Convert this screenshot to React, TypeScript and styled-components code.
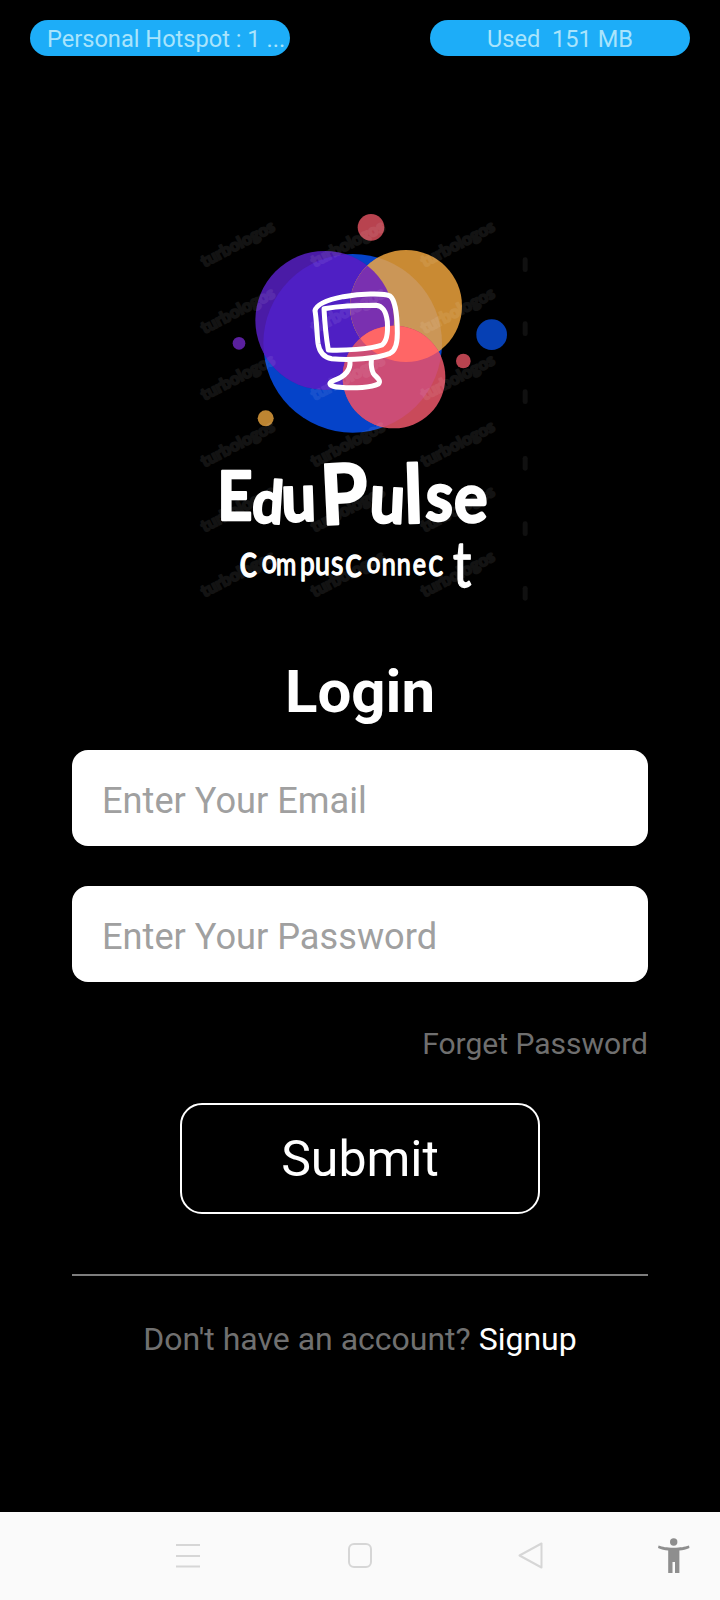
import React from "react";
import styled, { createGlobalStyle } from "styled-components";

const Global = createGlobalStyle`
  html, body { margin: 0; padding: 0; background: #000; }
  * { box-sizing: border-box; }
`;

const Screen = styled.div`
  width: 720px;
  height: 1600px;
  background: #000;
  display: flex;
  flex-direction: column;
  font-family: Roboto, "Liberation Sans", sans-serif;
  overflow: hidden;
`;

const TopBar = styled.div`
  display: flex;
  justify-content: space-between;
  padding: 20px 30px 0;
`;

const Pill = styled.div<{ $center?: boolean }>`
  width: 260px;
  height: 36px;
  border-radius: 18px;
  background: #1dadf8;
  color: #a9e4fc;
  font-size: 23.6px;
  line-height: 38px;
  white-space: nowrap;
  overflow: hidden;
  text-align: ${(p) => (p.$center ? "center" : "left")};
  padding-left: ${(p) => (p.$center ? "0" : "17px")};
`;

const LogoArt = styled.svg`
  display: block;
  width: 360px;
  height: 410px;
  margin: 144px auto 0;
  flex: none;
`;

const Mark = styled.text`
  font-family: Lato, "Open Sans", sans-serif;
  font-weight: 900;
  font-size: 50px;
  fill: #fff;
  stroke: #fff;
  stroke-width: 5px;
  stroke-linejoin: round;
  opacity: 0.075;
`;

const MarkEdge = styled.rect`
  fill: #101010;
`;

const Wordmark = styled.text`
  font-family: Lato, "Open Sans", sans-serif;
  font-weight: 700;
  fill: #fff;
  stroke: #fff;
  stroke-width: 7px;
  stroke-linejoin: round;
`;

const Tagline = styled.text`
  font-family: Lato, "Open Sans", sans-serif;
  font-weight: 400;
  fill: #fff;
  stroke: #fff;
  stroke-width: 4px;
  stroke-linejoin: round;
`;

const Form = styled.div`
  display: flex;
  flex-direction: column;
  padding: 0 72px;
`;

const Title = styled.h1`
  margin: 46px 0 23px;
  font-size: 60px;
  line-height: 71px;
  font-weight: 700;
  color: #fff;
  text-align: center;
`;

const Input = styled.input`
  display: block;
  width: 100%;
  height: 96px;
  border: 0;
  outline: 0;
  border-radius: 16px;
  background: #fff;
  padding: 4px 30px 0;
  font-family: inherit;
  font-size: 36.2px;
  color: #222;
  margin-bottom: 40px;
  &::placeholder { color: #a0a0a0; opacity: 1; }
`;

const Forgot = styled.div`
  margin-top: 4px;
  text-align: right;
  font-size: 30px;
  line-height: 36px;
  color: #6f6f6f;
`;

const SubmitButton = styled.button`
  display: block;
  width: 360px;
  height: 111px;
  margin: 41px auto 0;
  padding: 0;
  border: 2px solid #fff;
  border-radius: 22px;
  background: #000;
  color: #fff;
  font-family: inherit;
  font-size: 50px;
`;

const Divider = styled.div`
  height: 2px;
  background: #7d7d7d;
  margin-top: 60px;
`;

const Prompt = styled.div`
  margin-top: 45px;
  text-align: center;
  font-size: 32px;
  line-height: 36px;
  color: #707070;
`;

const SignupLink = styled.span`
  color: #fff;
`;

const NavBar = styled.div`
  margin-top: auto;
  height: 88px;
  background: #fafafa;
  display: flex;
  align-items: flex-start;
  padding: 25px 0 0 176px;
  flex: none;
`;

const NavIcon = styled.svg<{ $left: number; $top: number }>`
  display: block;
  flex: none;
  margin-left: ${(p) => p.$left}px;
  margin-top: ${(p) => p.$top}px;
`;

const marksX = [175, 505, 835];
const marksY = [135, 335, 535, 735, 930, 1125];
const edgeY = [172, 364, 568, 768, 964, 1158];

type L = [string, number, number, number, number];

const word: L[] = [
  ["E", 112, 960, 200, 0],
  ["d", 214, 965, 178, 4],
  ["u", 306, 965, 200, -2],
  ["P", 425, 975, 250, -3],
  ["u", 566, 965, 205, 3],
  ["l", 675, 970, 243, -2],
  ["s", 735, 960, 205, 2],
  ["e", 822, 965, 205, 0],
];

const tag: L[] = [
  ["c", 178, 1132, 138, 0],
  ["o", 245, 1120, 98, 0],
  ["m", 288, 1125, 90, 0],
  ["p", 360, 1125, 96, 0],
  ["u", 405, 1125, 98, 0],
  ["s", 453, 1125, 105, 0],
  ["c", 495, 1130, 130, 0],
  ["o", 560, 1120, 88, 0],
  ["n", 605, 1125, 92, 0],
  ["n", 650, 1125, 92, 0],
  ["e", 698, 1125, 92, 0],
  ["c", 745, 1128, 115, 0],
  ["t", 818, 1160, 190, 0],
];

function Letters({ items, sx }: { items: L[]; sx: number }) {
  return (
    <>
      {items.map(([c, x, y, s, r], i) => (
        <tspan key={i} x={x / sx} y={y} fontSize={s} rotate={r}>
          {c}
        </tspan>
      ))}
    </>
  );
}

function Logo() {
  const blue = <circle cx="518" cy="430" r="268" />;
  const purple = <circle cx="434" cy="361" r="208" />;
  const orange = <circle cx="678" cy="318" r="168" />;
  const red = <circle cx="642" cy="531" r="154" />;
  return (
    <LogoArt viewBox="0 0 1080 1230">
      <defs>
        <clipPath id="cb">{blue}</clipPath>
        <clipPath id="cp">{purple}</clipPath>
        <clipPath id="co">{orange}</clipPath>
        <clipPath id="cr">{red}</clipPath>
      </defs>
      <g fill="#0543c9">{blue}</g>
      <g fill="#4a1ba6">{purple}</g>
      <g fill="#4f1fc4" clipPath="url(#cb)">{purple}</g>
      <g fill="#c98a33">{orange}</g>
      <g fill="#cb9657" clipPath="url(#cb)">{orange}</g>
      <g clipPath="url(#cp)">
        <g fill="#7a30b0" clipPath="url(#co)">{blue}</g>
      </g>
      <g fill="#c94a5a">{red}</g>
      <g fill="#cc4d76" clipPath="url(#cb)">{red}</g>
      <g fill="#ff6666" clipPath="url(#co)">{red}</g>

      <circle cx="573" cy="82" r="40" fill="#b8434f" />
      <circle cx="935" cy="404" r="46" fill="#0640b4" />
      <circle cx="850" cy="483" r="22" fill="#b8434f" />
      <circle cx="177" cy="430" r="19" fill="#5a209e" />
      <circle cx="257" cy="655" r="24" fill="#bd8532" />

      {marksY.map((y) =>
        marksX.map((x) => (
          <Mark
            key={`${x}-${y}`}
            x={x}
            y={y}
            textAnchor="middle"
            dominantBaseline="middle"
            transform={`rotate(-27.5 ${x} ${y})`}
          >
            turbologos
          </Mark>
        ))
      )}
      {edgeY.map((y) => (
        <MarkEdge key={y} x="1028" y={y} width="15" height="44" rx="7" />
      ))}

      <g
        transform="translate(360 240)"
        fill="none"
        stroke="#fff"
        strokeWidth="15"
        strokeLinecap="round"
        strokeLinejoin="round"
      >
        <path d="M45 92C50 70 90 58 130 50C180 42 250 38 270 48C286 60 292 110 292 160C292 190 288 212 270 220C230 236 150 242 95 236C70 232 58 215 54 190C50 155 50 120 45 92Z" />
        <path d="M72 86C110 80 180 76 228 76C248 78 258 92 262 125C264 155 260 185 246 195C210 208 130 212 85 210C78 170 74 125 72 86Z" />
        <path d="M150 244C152 270 135 290 100 302C82 310 88 320 120 322C165 326 215 322 235 312C246 300 228 292 220 280C214 268 213 255 214 240" />
      </g>

      <Wordmark transform="scale(0.92 1)">
        <Letters items={word} sx={0.92} />
      </Wordmark>
      <Tagline transform="scale(0.82 1)">
        <Letters items={tag} sx={0.82} />
      </Tagline>
    </LogoArt>
  );
}

export default function App() {
  return (
    <Screen>
      <Global />
      <TopBar>
        <Pill>Personal Hotspot : 1 ...</Pill>
        <Pill $center>Used&nbsp;&nbsp;151 MB</Pill>
      </TopBar>
      <Logo />
      <Form>
        <Title>Login</Title>
        <Input type="email" placeholder="Enter Your Email" />
        <Input type="password" placeholder="Enter Your Password" />
        <Forgot>Forget Password</Forgot>
        <SubmitButton>Submit</SubmitButton>
        <Divider />
        <Prompt>
          Don't have an account? <SignupLink>Signup</SignupLink>
        </Prompt>
      </Form>
      <NavBar>
        <NavIcon $left={0} $top={7} width="24" height="24" viewBox="0 0 24 24" fill="none" stroke="#d6d6d6" strokeWidth="2">
          <path d="M0 1H24M0 12H24M0 22.5H24" />
        </NavIcon>
        <NavIcon $left={148} $top={6} width="24" height="25" viewBox="0 0 24 25" fill="none" stroke="#d6d6d6" strokeWidth="2">
          <rect x="1" y="1" width="22" height="23" rx="5" />
        </NavIcon>
        <NavIcon $left={146} $top={5} width="25" height="27" viewBox="0 0 25 27" fill="none" stroke="#d6d6d6" strokeWidth="2" strokeLinejoin="round">
          <path d="M23.5 1.5V25.5L1.5 13.5Z" />
        </NavIcon>
        <NavIcon $left={114} $top={0} width="34" height="38" viewBox="0 0 34 38" fill="#8e8e8e">
          <circle cx="16.7" cy="5" r="3.7" />
          <path d="M1.6 8.6C6 10 9 10.8 16.7 10.8C24 10.8 27 10 32 8.6L32.5 11C29 12.4 26 13.2 22.4 13.6V36H18V25H15.5V36H11.2V13.6C7.5 13.2 4.5 12.4 1 11Z" />
        </NavIcon>
      </NavBar>
    </Screen>
  );
}
